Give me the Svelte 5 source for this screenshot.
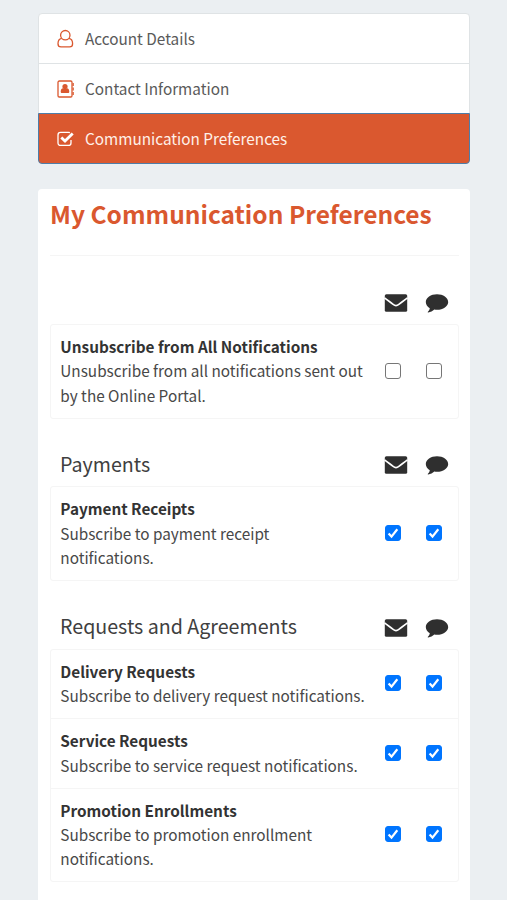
<script lang="ts">
	type Row = { title: string; text: string; email: boolean; sms: boolean };
	type Group = { heading: string; rows: Row[] };

	const menu = [
		{ label: 'Account Details', icon: 'user' },
		{ label: 'Contact Information', icon: 'book' },
		{ label: 'Communication Preferences', icon: 'check' }
	];

	let active = $state('Communication Preferences');

	let groups: Group[] = $state([
		{
			heading: '',
			rows: [
				{
					title: 'Unsubscribe from All Notifications',
					text: 'Unsubscribe from all notifications sent out by the Online Portal.',
					email: false,
					sms: false
				}
			]
		},
		{
			heading: 'Payments',
			rows: [
				{
					title: 'Payment Receipts',
					text: 'Subscribe to payment receipt notifications.',
					email: true,
					sms: true
				}
			]
		},
		{
			heading: 'Requests and Agreements',
			rows: [
				{
					title: 'Delivery Requests',
					text: 'Subscribe to delivery request notifications.',
					email: true,
					sms: true
				},
				{
					title: 'Service Requests',
					text: 'Subscribe to service request notifications.',
					email: true,
					sms: true
				},
				{
					title: 'Promotion Enrollments',
					text: 'Subscribe to promotion enrollment notifications.',
					email: true,
					sms: true
				}
			]
		}
	]);
</script>

{#snippet checkbox(row: Row, key: 'email' | 'sms')}
	<label class="check">
		<input type="checkbox" bind:checked={row[key]} aria-label="{row.title} {key}" />
		<svg viewBox="0 0 16 16" aria-hidden="true">
			<path d="M3.6 8.6 6.5 11.6 12.3 4.2" />
		</svg>
	</label>
{/snippet}

<div class="page">
	<nav class="menu">
		{#each menu as item}
			<button
				class="menu-item"
				class:active={active === item.label}
				onclick={() => (active = item.label)}
			>
				<svg class="menu-icon" viewBox="0 0 18 20" aria-hidden="true">
					{#if item.icon === 'user'}
						<path
							class="line"
							d="M4.6 9.3C2.2 9.7 1 11.9 1 14.7c0 2 1.2 3.2 3 3.2h8.6c1.8 0 3-1.2 3-3.2 0-2.8-1.2-5-3.6-5.4"
						/>
						<circle class="line" cx="8.300" cy="6.2" r="4.7" />
					{:else if item.icon === 'book'}
						<rect class="line" x="1" y="2" width="14" height="16" rx="1.3" />
						<path class="fill" d="M15.5 4h1.3v3h-1.3zM15.5 8.5h1.3v3h-1.3zM15.5 13h1.3v3h-1.3z" />
						<circle class="fill" cx="8" cy="7.6" r="2.6" />
						<path
							class="fill"
							d="M6 9.2c-1.5.2-2.3 1.6-2.3 3.6 0 .8.5 1.3 1.2 1.3h6.2c.7 0 1.2-.5 1.2-1.3 0-2-.8-3.4-2.3-3.6-1.2.9-2.8.9-4 0z"
						/>
					{:else}
						<path
							class="line"
							d="M14 11v2.9c0 1.5-1 2.5-2.5 2.5h-8C2 16.4 1 15.4 1 13.9v-8c0-1.5 1-2.5 2.5-2.5h8c.6 0 1 .1 1.4.3"
						/>
						<path class="tick" d="M4.3 8.5 8 12.1l7.7-7.7" />
					{/if}
				</svg>
				<span>{item.label}</span>
			</button>
		{/each}
	</nav>

	<main class="panel">
		<h1>My Communication Preferences</h1>

		{#each groups as group}
			<section>
				<header class="group-head">
					<h2>{group.heading}</h2>
					<svg class="channel" viewBox="0 0 24 20" aria-hidden="true">
						<rect x="0.8" y="1.2" width="22.4" height="17.6" rx="1.6" />
						<path
							class="flap"
							d="M.5 4.8c2.7 2.2 5.6 4.2 8.3 6.3 1.3 1 2.2 1.5 3.2 1.5s1.9-.5 3.2-1.5c2.7-2.1 5.6-4.1 8.3-6.3"
						/>
					</svg>
					<svg class="channel" viewBox="0 0 24 20" aria-hidden="true">
						<path
							d="M12 1.2c6.2 0 11.2 3.5 11.2 7.8s-5 7.8-11.2 7.8c-.9 0-1.8-.1-2.7-.2C7.7 18.2 5.5 19.2 3.2 19.5c-.4 0-.6-.4-.3-.7 1-1 1.7-2 1.9-3.500C2.300 13.800.8 11.500.8 9c0-4.300 5-7.800 11.200-7.800z"
						/>
					</svg>
				</header>

				<div class="rows">
					{#each group.rows as row}
						<div class="row">
							<div class="copy">
								<strong>{row.title}</strong>
								<p>{row.text}</p>
							</div>
							{@render checkbox(row, 'email')}
							{@render checkbox(row, 'sms')}
						</div>
					{/each}
				</div>
			</section>
		{/each}
	</main>
</div>

<style>
	:global(body) {
		background: #ebeff2;
	}

	.page {
		box-sizing: border-box;
		height: 900px;
		overflow: hidden;
		padding: 13px 37px 0 38px;
		font-family: 'Noto Sans CJK SC', 'Source Sans Pro', sans-serif;
		font-size: 15.32px;
		line-height: 24.4px;
		color: #333;
	}

	/* Side menu */
	.menu {
		display: flex;
		flex-direction: column;
		margin-bottom: 25px;
	}

	.menu-item {
		box-sizing: border-box;
		display: flex;
		align-items: center;
		gap: 10.5px;
		height: 51px;
		margin: 0 0 -1px;
		padding: 0 17.5px;
		border: 1px solid #dfe3e5;
		background: #fff;
		color: #5a5a5a;
		font: inherit;
		text-align: left;
		cursor: pointer;
	}

	.menu-item:first-child {
		border-radius: 4px 4px 0 0;
	}

	.menu-item:last-child {
		margin-bottom: 0;
		border-radius: 0 0 4px 4px;
	}

	.menu-item.active {
		z-index: 1;
		border-color: #4d7da8;
		background: #da582f;
		color: #fff0e8;
	}

	.menu-icon {
		width: 18px;
		height: 20px;
		color: #da582f;
	}

	.active .menu-icon {
		color: #fff;
	}

	.line {
		fill: none;
		stroke: currentColor;
		stroke-width: 1.3;
	}

	.fill {
		fill: currentColor;
	}

	.tick {
		fill: none;
		stroke: currentColor;
		stroke-width: 2.8;
	}

	/* Preferences panel */
	.panel {
		box-sizing: border-box;
		min-height: 760px;
		padding: 0 11px 0 12px;
		border-radius: 4px 4px 0 0;
		background: #fff;
	}

	h1 {
		box-sizing: border-box;
		height: 67px;
		margin: 0 0 22px;
		padding-top: 8px;
		border-bottom: 1px solid #f5f5f5;
		color: #da582f;
		font-size: 24.5px;
		font-weight: 700;
		line-height: 34px;
		white-space: nowrap;
	}

	.group-head {
		display: flex;
		align-items: center;
		height: 46px;
		padding: 0 10px;
	}

	h2 {
		flex: 1;
		margin: 0;
		padding-top: 1px;
		color: #404040;
		font-size: 19.65px;
		font-weight: 400;
		line-height: 30px;
	}

	.channel {
		width: 24px;
		height: 20px;
		margin: 3.5px 0 0 17.5px;
		fill: #2f2f2f;
	}

	.flap {
		fill: none;
		stroke: #fff;
		stroke-width: 1.6;
	}

	.rows {
		margin-bottom: 21.6px;
		border: 1px solid #f5f5f5;
		border-radius: 3px;
	}

	.row {
		display: flex;
		align-items: center;
		padding: 9px 16px 10.6px 9.3px;
	}

	.row + .row {
		border-top: 1px solid #f5f5f5;
	}

	.copy {
		flex: 1;
	}

	p {
		max-width: 305px;
		margin: 0;
		color: #484848;
	}

	.check {
		position: relative;
		flex: none;
		width: 16px;
		height: 16px;
	}

	.check + .check {
		margin-left: 25.5px;
	}

	input {
		appearance: none;
		box-sizing: border-box;
		display: block;
		width: 16px;
		height: 16px;
		margin: 0;
		border: 1px solid #767676;
		border-radius: 3px;
		background: #fff;
	}

	input:checked {
		border-color: #0075ff;
		background: #0075ff;
	}

	.check svg {
		position: absolute;
		inset: 0;
		fill: none;
		stroke: #fff;
		stroke-width: 2.2;
		pointer-events: none;
	}
</style>
